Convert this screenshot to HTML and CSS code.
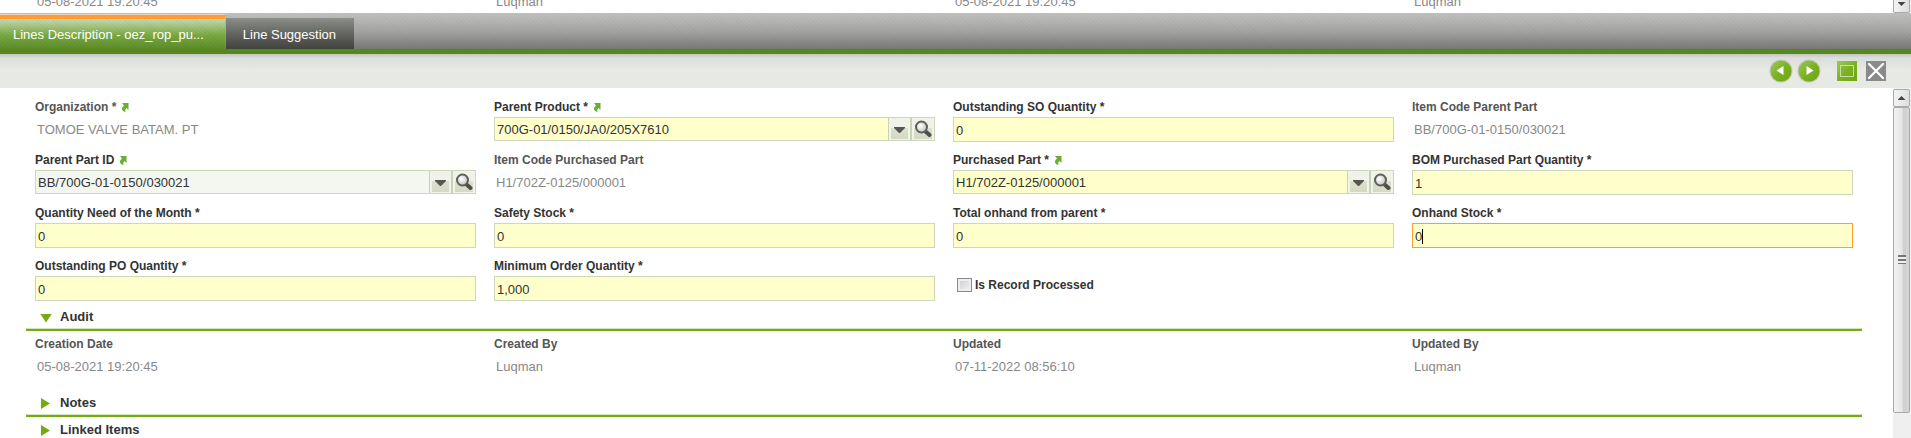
FILE: index.html
```html
<!DOCTYPE html>
<html lang="en">
<head>
  <meta charset="utf-8">
  <title>Lines Description</title>
  <link rel="stylesheet" href="styles.css">
</head>
<body>
  <svg class="defs" aria-hidden="true">
    <defs>
      <linearGradient id="green" x1="0" y1="0" x2="1" y2="1">
        <stop offset="0" stop-color="#9cc95a"/>
        <stop offset="0.5" stop-color="#7bb224"/>
        <stop offset="1" stop-color="#6ca60c"/>
      </linearGradient>
      <radialGradient id="lens" cx="0.4" cy="0.4" r="0.6">
        <stop offset="0" stop-color="#ffffff"/>
        <stop offset="1" stop-color="#c4c6c2"/>
      </radialGradient>
      <symbol id="link-arrow" viewBox="0 0 8 9">
        <path d="M1 0H7.500V7L5.500 5Q3.500 6.500 4.500 9Q0.500 8 1 5Q1.500 3.500 3 2.500Z" fill="#6aae35"/>
      </symbol>
      <symbol id="caret-down" viewBox="0 0 11 7">
        <path d="M0 0H11V1L6 6H5L0 1Z" fill="#555850"/>
      </symbol>
      <symbol id="search" viewBox="0 0 18 18">
        <path d="M11 11L15.500 15" stroke="#4c4e49" stroke-width="4" stroke-linecap="round"/>
        <circle cx="7.500" cy="7" r="5.500" fill="url(#lens)" stroke="#5d605a" stroke-width="2"/>
      </symbol>
    </defs>
  </svg>

  <div class="header-form">
    <div class="fields">
      <div class="value">05-08-2021 19:20:45</div>
      <div class="value">Luqman</div>
      <div class="value">05-08-2021 19:20:45</div>
      <div class="value">Luqman</div>
    </div>
    <div class="scrollbar">
      <div class="scroll-button down"></div>
    </div>
  </div>

  <nav class="tabs">
    <button class="tab active" type="button">Lines Description - oez_rop_pu...</button>
    <button class="tab" type="button">Line Suggestion</button>
  </nav>

  <div class="toolbar">
    <button type="button" aria-label="Previous record">
      <svg width="24" height="24" viewBox="0 0 24 24">
        <circle cx="12" cy="12" r="11.500" fill="#c3c8bd"/>
        <circle cx="12" cy="12" r="10.500" fill="url(#green)"/>
        <path d="M14.500 7V16L7.500 11.500Z" fill="#fff"/>
      </svg>
    </button>
    <button type="button" aria-label="Next record">
      <svg width="24" height="24" viewBox="0 0 24 24">
        <circle cx="12" cy="12" r="11.500" fill="#c3c8bd"/>
        <circle cx="12" cy="12" r="10.500" fill="url(#green)"/>
        <path d="M9.500 7V16L16.500 11.500Z" fill="#fff"/>
      </svg>
    </button>
    <button class="maximize" type="button" aria-label="Maximize">
      <svg width="20" height="20" viewBox="0 0 20 20">
        <rect width="20" height="20" fill="url(#green)"/>
        <rect x="3.500" y="4.500" width="13" height="11" fill="none" stroke="#c5e09a"/>
      </svg>
    </button>
    <button class="close" type="button" aria-label="Close">
      <svg width="20" height="20" viewBox="0 0 20 20">
        <rect width="20" height="20" fill="#8a8a8a"/>
        <path d="M3 3L17 17M17 3L3 17" stroke="#fff" stroke-width="2.200" stroke-linecap="round"/>
      </svg>
    </button>
  </div>

  <div class="panel">
    <form class="form">
      <div class="fields">
        <div class="field readonly">
          <div class="label">Organization * <a href="#" aria-label="Open organization"><svg><use href="#link-arrow"/></svg></a></div>
          <div class="value">TOMOE VALVE BATAM. PT</div>
        </div>
        <div class="field">
          <div class="label"><label for="parent-product">Parent Product *</label> <a href="#" aria-label="Open product"><svg><use href="#link-arrow"/></svg></a></div>
          <div class="combo">
            <input id="parent-product" type="text" value="700G-01/0150/JA0/205X7610">
            <button type="button" aria-label="Show options"><svg class="caret-icon"><use href="#caret-down"/></svg></button>
            <button type="button" aria-label="Search"><svg class="search-icon"><use href="#search"/></svg></button>
          </div>
        </div>
        <div class="field">
          <div class="label"><label for="so-quantity">Outstanding SO Quantity *</label></div>
          <input id="so-quantity" type="text" value="0">
        </div>
        <div class="field readonly">
          <div class="label">Item Code Parent Part</div>
          <div class="value">BB/700G-01-0150/030021</div>
        </div>

        <div class="field">
          <div class="label"><label for="parent-part">Parent Part ID</label> <a href="#" aria-label="Open parent part"><svg><use href="#link-arrow"/></svg></a></div>
          <div class="combo optional">
            <input id="parent-part" type="text" value="BB/700G-01-0150/030021">
            <button type="button" aria-label="Show options"><svg class="caret-icon"><use href="#caret-down"/></svg></button>
            <button type="button" aria-label="Search"><svg class="search-icon"><use href="#search"/></svg></button>
          </div>
        </div>
        <div class="field readonly">
          <div class="label">Item Code Purchased Part</div>
          <div class="value">H1/702Z-0125/000001</div>
        </div>
        <div class="field">
          <div class="label"><label for="purchased-part">Purchased Part *</label> <a href="#" aria-label="Open purchased part"><svg><use href="#link-arrow"/></svg></a></div>
          <div class="combo">
            <input id="purchased-part" type="text" value="H1/702Z-0125/000001">
            <button type="button" aria-label="Show options"><svg class="caret-icon"><use href="#caret-down"/></svg></button>
            <button type="button" aria-label="Search"><svg class="search-icon"><use href="#search"/></svg></button>
          </div>
        </div>
        <div class="field">
          <div class="label"><label for="bom-quantity">BOM Purchased Part Quantity *</label></div>
          <input id="bom-quantity" type="text" value="1">
        </div>

        <div class="field">
          <div class="label"><label for="month-need">Quantity Need of the Month *</label></div>
          <input id="month-need" type="text" value="0">
        </div>
        <div class="field">
          <div class="label"><label for="safety-stock">Safety Stock *</label></div>
          <input id="safety-stock" type="text" value="0">
        </div>
        <div class="field">
          <div class="label"><label for="total-onhand">Total onhand from parent *</label></div>
          <input id="total-onhand" type="text" value="0">
        </div>
        <div class="field focused">
          <div class="label"><label for="onhand-stock">Onhand Stock *</label></div>
          <input id="onhand-stock" type="text" value="0">
          <span class="cursor"></span>
        </div>

        <div class="field">
          <div class="label"><label for="po-quantity">Outstanding PO Quantity *</label></div>
          <input id="po-quantity" type="text" value="0">
        </div>
        <div class="field">
          <div class="label"><label for="min-order">Minimum Order Quantity *</label></div>
          <input id="min-order" type="text" value="1,000">
        </div>
        <div class="field check">
          <input id="processed" type="checkbox">
          <label for="processed">Is Record Processed</label>
        </div>
      </div>

      <button class="section open" type="button"><span class="arrow"></span>Audit</button>
      <div class="fields audit">
        <div class="field readonly">
          <div class="label">Creation Date</div>
          <div class="value">05-08-2021 19:20:45</div>
        </div>
        <div class="field readonly">
          <div class="label">Created By</div>
          <div class="value">Luqman</div>
        </div>
        <div class="field readonly">
          <div class="label">Updated</div>
          <div class="value">07-11-2022 08:56:10</div>
        </div>
        <div class="field readonly">
          <div class="label">Updated By</div>
          <div class="value">Luqman</div>
        </div>
      </div>
      <button class="section" type="button"><span class="arrow"></span>Notes</button>
      <button class="section" type="button"><span class="arrow"></span>Linked Items</button>
    </form>
    <div class="scrollbar">
      <div class="scroll-button up"></div>
      <div class="thumb"><span class="grip"></span></div>
      <div class="track"></div>
    </div>
  </div>
</body>
</html>
```
FILE: styles.css
```css
* { box-sizing: border-box; }
body {
  display: flex;
  flex-direction: column;
  height: 100vh;
  margin: 0;
  overflow: hidden;
  background: #fff;
  color: #333;
  font-family: "Liberation Sans", Arial, sans-serif;
  font-size: 13px;
}
button, input { font-family: inherit; font-size: 13px; color: inherit; margin: 0; }
button { padding: 0; border: 0; background: none; cursor: pointer; }
svg { display: block; }
.defs { position: absolute; width: 0; height: 0; }

/* bottom edge of the header form */
.header-form { display: flex; align-items: flex-end; flex: none; height: 13px; overflow: hidden; }
.header-form .fields { flex: 1; margin: 0 31px 0 26px; }
.header-form .value { margin-bottom: -1px; }

/* tabs */
.tabs {
  display: flex;
  align-items: flex-end;
  gap: 1px;
  flex: none;
  height: 41px;
  border-bottom: 5px solid #558a1b;
  background: repeating-linear-gradient(45deg, rgba(0,0,0,0.02) 0 1px, transparent 1px 3px), linear-gradient(#c0c0bf, #a4a4a3 50%, #777776);
}
.tab {
  height: 31px;
  padding: 0 18px 0 17px;
  border-top: 1px solid #8d8e8b;
  background: linear-gradient(#888b86, #62645f 50%, #42423f);
  color: #fff;
}
.tab.active {
  height: 34px;
  padding: 0 21px 0 13px;
  border-top: 4px solid #ff9c33;
  box-shadow: 0 -1px #e8d3bb;
  background: repeating-linear-gradient(45deg, rgba(0,0,0,0.03) 0 1px, transparent 1px 3px), linear-gradient(#c6d9b3, #78a83f 55%, #5c8b2b);
}

.toolbar {
  display: flex;
  align-items: center;
  justify-content: flex-end;
  gap: 4px;
  flex: none;
  height: 34px;
  padding: 0 25px 0 0;
  background: linear-gradient(#c2c4c6, #dcdfd9 4px, #e7eae4 16px, #e7eae4);
}
.toolbar .maximize { margin-left: 12px; }
.toolbar .close { margin-left: 5px; }

.panel { display: flex; flex: 1; min-height: 0; overflow: hidden; }
.form { flex: 1; padding: 10px 31px 0 26px; }
.fields {
  display: grid;
  grid-template-columns: repeat(4, minmax(0, 1fr));
  gap: 9px 18px;
  padding: 0 9px;
}
.field { position: relative; }
.label {
  display: flex;
  align-items: center;
  gap: 5px;
  height: 19px;
  padding-bottom: 2px;
  font-size: 12px;
  font-weight: bold;
}
.label svg { width: 8px; height: 9px; margin-top: 1px; }
.readonly .label { color: #555; }
.value { height: 25px; padding: 0 2px; line-height: 25px; color: #888; }

input[type="text"] {
  display: block;
  width: 100%;
  height: 25px;
  padding: 1px 2px 0;
  border: 1px solid #cdd7bb;
  border-radius: 0;
  outline: 0;
  background: #ffffcc;
}
.focused input[type="text"] { border-color: #ff9c33; }
.cursor { position: absolute; left: 10px; top: 25px; width: 1px; height: 15px; background: #000; }

.combo { display: flex; height: 24px; border: 1px solid #cdd7bb; background: #ffffcc; }
.combo input[type="text"] { flex: 1; min-width: 0; height: 22px; padding-top: 0; border: 0; background: none; }
.combo.optional { background: #f4f7f0; }
.combo button {
  display: flex;
  align-items: center;
  justify-content: center;
  width: 21px;
  border: solid #f0f4e9;
  border-width: 1px 2px;
  background: linear-gradient(#f0f2ea 45%, #dde0cf 45%, #d5d9c4);
  box-shadow: -1px 0 #c8d4b8;
}
.combo button + button { width: 22px; margin-left: 2px; box-shadow: -2px 0 #c8d4b8; }
.caret-icon { width: 11px; height: 7px; margin-top: 3px; }
.search-icon { flex: none; width: 18px; height: 18px; margin-top: -1px; }

.check { display: flex; align-items: center; gap: 3px; padding: 12px 4px 0; font-size: 12px; font-weight: bold; }
.check input {
  appearance: none;
  width: 15px;
  height: 14px;
  border: 1px solid #888;
  background: linear-gradient(135deg, #c8ccd2, #f4f4f4);
  box-shadow: inset 0 0 0 2px #eee;
}

.section {
  display: flex;
  align-items: center;
  width: 100%;
  height: 27px;
  padding: 0 14px;
  border-bottom: 2px solid #73ab12;
  box-shadow: inset 0 -1px #d5e7b8;
  font-weight: bold;
}
.section.open { margin-top: 3px; }
.section .arrow { width: 20px; }
.section .arrow::before {
  content: "";
  display: block;
  width: 9px;
  height: 11px;
  margin: 2px 0 0 1px;
  background: #73ab12;
  clip-path: polygon(0 0, 100% 50%, 0 100%);
}
.section.open .arrow::before { width: 12px; height: 9px; margin: 3px 0 0; clip-path: polygon(0 0, 100% 0, 50% 100%); }
.audit { padding-top: 4px; padding-bottom: 11px; }

/* scrollbars */
.scrollbar { display: flex; flex-direction: column; flex: none; width: 18px; padding: 1px 1px 0 0; background: #efefef; }
.scroll-button {
  display: flex;
  align-items: center;
  justify-content: center;
  flex: none;
  height: 18px;
  border: 1px solid #aaa;
  border-radius: 2px;
  background: linear-gradient(90deg, #f4f4f4, #dedede);
}
.scroll-button::before { content: ""; width: 8px; height: 4px; background: #444; clip-path: polygon(50% 0, 100% 100%, 0 100%); }
.scroll-button.down::before { clip-path: polygon(0 0, 100% 0, 50% 100%); }
.thumb {
  display: flex;
  align-items: center;
  justify-content: center;
  flex: 12;
  border: 1px solid #aaa;
  border-radius: 2px;
  background: linear-gradient(90deg, #f2f2f2, #e6e6e6 55%, #cfcfcf 60%, #d6d6d6);
}
.grip { width: 8px; height: 9px; background: repeating-linear-gradient(#777 0 2px, #eee 2px 4px); }
.track { flex: 1; }
```
